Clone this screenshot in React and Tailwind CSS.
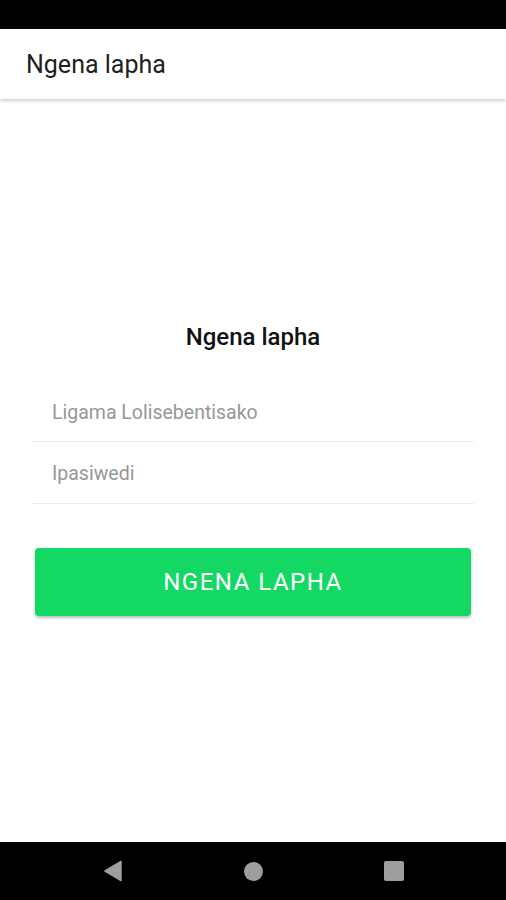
import React, { useState } from 'react';

const NavBar = () => (
    <div className="h-[58px] bg-black flex items-center justify-center gap-[121px]">
        <svg width="20" height="22" viewBox="0 0 20 22">
            <path d="M18 1.5 L18 20.5 L2 11 Z" fill="#9e9e9e" stroke="#9e9e9e" strokeWidth="1.5" strokeLinejoin="round" />
        </svg>
        <div className="w-[19px] h-[19px] rounded-full bg-[#9e9e9e]" />
        <div className="w-[20px] h-[20px] rounded-[2px] bg-[#9e9e9e]" />
    </div>
);

const App = () => {
    const [username, setUsername] = useState('');
    const [password, setPassword] = useState('');

    return (
        <div className="w-[506px] h-[900px] flex flex-col bg-white font-['Roboto',sans-serif]">
            {/* Status bar */}
            <div className="h-[29px] bg-black" />

            {/* Toolbar */}
            <div className="h-[70px] flex items-center px-[26px] pt-[2px] bg-white shadow-[0_2px_3px_rgba(0,0,0,0.18)] z-10">
                <h1 className="text-[25px] text-[#212121]">Ngena lapha</h1>
            </div>

            {/* Form */}
            <div className="flex-1 flex flex-col justify-center px-[32px] pb-[6px]">
                <h2 className="text-center text-[24px] font-medium text-[#111] mb-[27px]">Ngena lapha</h2>

                <input
                    type="text"
                    value={username}
                    onChange={(e) => setUsername(e.target.value)}
                    placeholder="Ligama Lolisebentisako"
                    className="h-[60px] px-[20px] pt-[2px] text-[19.5px] text-[#333] placeholder:text-[#979797] border-b border-[#ebebeb] outline-none"
                />
                <input
                    type="password"
                    value={password}
                    onChange={(e) => setPassword(e.target.value)}
                    placeholder="Ipasiwedi"
                    className="h-[62px] px-[20px] pt-[2px] text-[19.5px] text-[#333] placeholder:text-[#979797] border-b border-[#ebebeb] outline-none"
                />

                <button className="mt-[44px] mx-[3px] h-[68px] rounded-[4px] bg-[#13d964] text-white text-[24px] tracking-[1.5px] shadow-[0_2px_3px_rgba(0,0,0,0.25)]">
                    NGENA LAPHA
                </button>
            </div>

            <NavBar />
        </div>
    );
};

export default App;
